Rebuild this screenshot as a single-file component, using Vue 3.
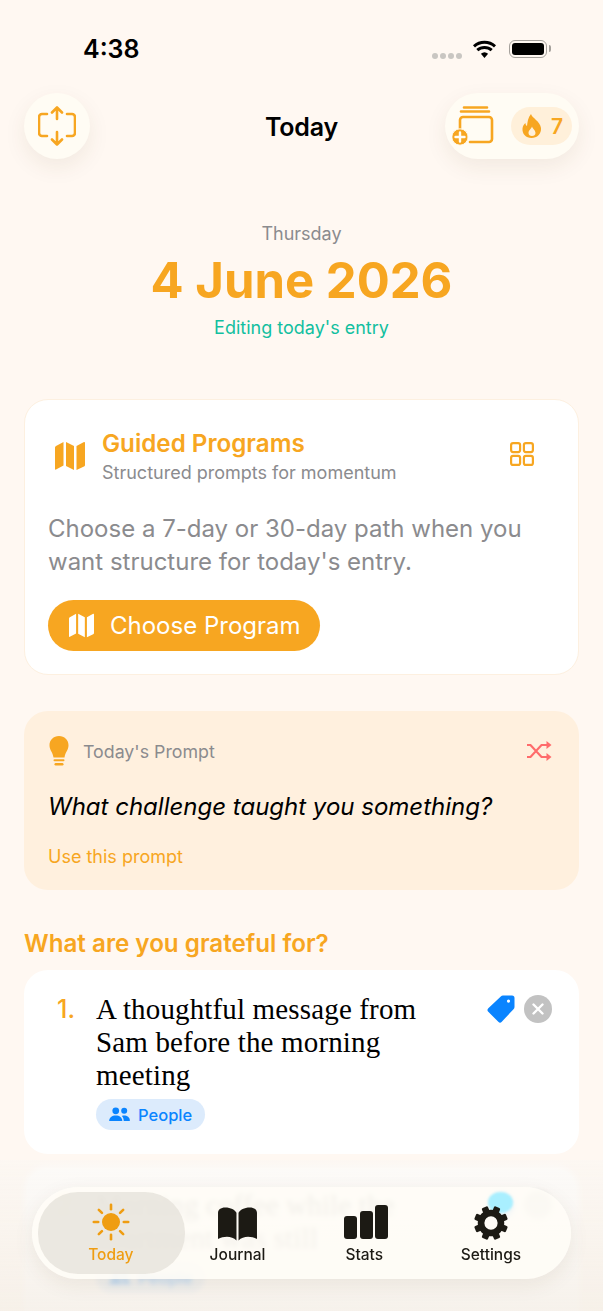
<script setup>
const tabs = [
  { key: 'today', label: 'Today' },
  { key: 'journal', label: 'Journal' },
  { key: 'stats', label: 'Stats' },
  { key: 'settings', label: 'Settings' },
]
const gearTeeth = [0, 45, 90, 135, 180, 225, 270, 315]
const sunRays = [0, 45, 90, 135, 180, 225, 270, 315]
</script>

<template>
  <div class="screen">
    <div class="status-bar">
      <span class="clock">4:38</span>
      <div class="status-icons">
        <div class="signal"><i></i><i></i><i></i><i></i></div>
        <svg class="wifi" viewBox="0 0 24 18" width="25" height="18">
          <path d="M12 18l-3.600-4.200a5.400 5.400 0 0 1 7.200 0z" fill="#000" />
          <path d="M4.800 10.200a10.600 10.600 0 0 1 14.400 0M1.500 6.300a15.600 15.600 0 0 1 21 0" fill="none" stroke="#000" stroke-width="3" />
        </svg>
        <div class="battery"><div class="battery-fill"></div></div>
      </div>
    </div>

    <header class="nav">
      <button class="round-btn">
        <svg viewBox="0 0 38 40" width="38" height="40" fill="none" stroke="#F7A621" stroke-width="2.600" stroke-linecap="round" stroke-linejoin="round">
          <path d="M9 8H4a3 3 0 0 0-3 3v16a3 3 0 0 0 3 3h5M29 8h5a3 3 0 0 1 3 3v16a3 3 0 0 1-3 3h-5" />
          <path d="M19 13V1.500M14 6.500l5-5 5 5M19 26v12.500M14 33.500l5 5 5-5" />
        </svg>
      </button>
      <h1 class="nav-title">Today</h1>
      <div class="nav-side">
        <div class="nav-pill">
          <svg class="cards-icon" viewBox="0 0 42 40" width="42" height="40" fill="none" stroke="#F7A621" stroke-width="2.600" stroke-linecap="round">
            <path d="M12 1.500h23M9 5.500h28" />
            <path d="M8 24V14a3 3 0 0 1 3-3h26a3 3 0 0 1 3 3v19a3 3 0 0 1-3 3H18" />
            <circle cx="8" cy="31" r="8.200" fill="#F7A621" stroke="#FFFCF4" stroke-width="1" />
            <path d="M8 26.500v9M3.500 31h9" stroke="#FFFCF4" stroke-width="2.400" />
          </svg>
          <div class="streak">
            <svg viewBox="0 0 20 24" width="20" height="24">
              <path fill="#F7A621" fill-rule="evenodd" d="M9 0c1 4 9 7 10 14 .5 6-4 10-9.500 10S0 20 .5 14.500c.2-2.500 1.500-4.500 3-5.500 0 1.500.5 2.500 1.500 3C5.500 8 6 3.500 9 0zM10 12.500c-.5 2-3.500 3.500-3.500 6.500 0 2 1.500 3 3.500 3s3.500-1 3.500-3c0-3-3-4.500-3.500-6.500z" />
            </svg>
            <span>7</span>
          </div>
        </div>
      </div>
    </header>

    <section class="date-block">
      <p class="weekday">Thursday</p>
      <p class="date">4 June 2026</p>
      <p class="editing">Editing today's entry</p>
    </section>

    <section class="card program-card">
      <div class="program-head">
        <svg class="map-icon" viewBox="0 0 32 30" width="32" height="30" fill="#F7A621">
          <path d="M1 6.500Q1 5.500 2 5L9.500 1v23.500L2 28.500Q1 29 1 28zM12 1l8 4v24l-8-4zM22.500 5L30 1q1-.3 1 1v22q0 1-1 1.500L22.500 29z" />
        </svg>
        <div class="program-titles">
          <h2>Guided Programs</h2>
          <p>Structured prompts for momentum</p>
        </div>
        <svg class="grid-icon" viewBox="0 0 24 24" width="24" height="24" fill="none" stroke="#F7A621" stroke-width="2.200">
          <rect x="1.100" y="1.100" width="9" height="9" rx="2" />
          <rect x="13.900" y="1.100" width="9" height="9" rx="2" />
          <rect x="1.100" y="13.900" width="9" height="9" rx="2" />
          <rect x="13.900" y="13.900" width="9" height="9" rx="2" />
        </svg>
      </div>
      <p class="program-copy">Choose a 7-day or 30-day path when you want structure for today's entry.</p>
      <button class="choose-btn">
        <svg viewBox="0 0 32 30" width="27" height="25" fill="#fff">
          <path d="M1 6.500Q1 5.500 2 5L9.500 1v23.500L2 28.500Q1 29 1 28zM12 1l8 4v24l-8-4zM22.500 5L30 1q1-.3 1 1v22q0 1-1 1.500L22.500 29z" />
        </svg>
        <span>Choose Program</span>
      </button>
    </section>

    <section class="card prompt-card">
      <div class="prompt-head">
        <svg class="bulb" viewBox="0 0 20 30" width="20" height="30" fill="#F7A621">
          <path d="M10 0c5.500 0 9.500 4 9.500 9.200 0 5-3.300 6.800-4 12.300H4.500c-.7-5.500-4-7.300-4-12.300C.5 4 4.500 0 10 0z" />
          <rect x="4.500" y="23.300" width="11" height="2" rx="1" />
          <rect x="5.500" y="27" width="9" height="2.400" rx="1.200" />
        </svg>
        <span class="prompt-label">Today's Prompt</span>
        <svg class="shuffle" viewBox="0 0 26 20" width="26" height="20" fill="none" stroke="#FF6B6B" stroke-width="2.200">
          <path d="M1 4h3.500l11 12H21M1 16h3.500l11-12H21" />
          <path d="M20.500 0l5 4-5 4zM20.500 12l5 4-5 4z" fill="#FF6B6B" stroke="none" />
        </svg>
      </div>
      <p class="prompt-text">What challenge taught you something?</p>
      <a class="prompt-link">Use this prompt</a>
    </section>

    <h3 class="section-title">What are you grateful for?</h3>

    <section class="card entry-card">
      <span class="entry-num">1.</span>
      <div class="entry-body">
        <p class="entry-text">A thoughtful message from Sam before the morning meeting</p>
        <span class="chip">
          <svg viewBox="0 0 22 16" width="21" height="15" fill="#0A84FF">
            <circle cx="7" cy="4" r="3.600" />
            <circle cx="16" cy="4" r="3.200" />
            <path d="M0 15c0-4 3-6 7-6s7 2 7 6zM15.500 15c0-2.300-.6-4.200-2-5.500 4-1.200 8.500.8 8.500 4.500v1z" />
          </svg>
          People
        </span>
      </div>
      <div class="entry-actions">
        <svg viewBox="0 0 28 28" width="28" height="28">
          <path fill="#0A84FF" fill-rule="evenodd" d="M16 .5h9A2.500 2.500 0 0 1 27.500 3v9a3 3 0 0 1-1 2.200L14.800 26.800a2.500 2.500 0 0 1-3.500 0l-10-10a2.500 2.500 0 0 1 0-3.500L13.800 1.500a3 3 0 0 1 2.200-1zM21.500 4.500a1.600 1.600 0 1 0 0 3.200 1.600 1.600 0 0 0 0-3.200z" />
        </svg>
        <div class="close-dot">
          <svg viewBox="0 0 12 12" width="12" height="12" stroke="#fff" stroke-width="2.400" stroke-linecap="round">
            <path d="M1.500 1.500l9 9M10.500 1.500l-9 9" />
          </svg>
        </div>
      </div>
    </section>

    <section class="card entry-card">
      <span class="entry-num">2.</span>
      <div class="entry-body">
        <p class="entry-text">Morning coffee while the apartment was still</p>
        <span class="chip">
          <svg viewBox="0 0 22 16" width="21" height="15" fill="#0A84FF">
            <circle cx="7" cy="4" r="3.600" />
            <circle cx="16" cy="4" r="3.200" />
            <path d="M0 15c0-4 3-6 7-6s7 2 7 6zM15.500 15c0-2.300-.6-4.200-2-5.500 4-1.200 8.500.8 8.500 4.500v1z" />
          </svg>
          People
        </span>
      </div>
      <div class="entry-actions">
        <svg viewBox="0 0 28 28" width="28" height="28">
          <circle cx="14" cy="14" r="13" fill="#0A84FF" />
        </svg>
        <div class="close-dot"></div>
      </div>
    </section>

    <div class="bottom-fade"></div>

    <nav class="tabbar">
      <div class="lens-blob"></div>
      <div v-for="tab in tabs" :key="tab.key" class="tab" :class="{ active: tab.key === 'today' }">
        <svg v-if="tab.key === 'today'" viewBox="0 0 38 38" width="38" height="38">
          <circle cx="19" cy="19" r="9" fill="#EF9D12" />
          <rect v-for="r in sunRays" :key="r" x="17.700" y="0.500" width="2.600" height="7" rx="1.300" fill="#EF9D12" :transform="`rotate(${r} 19 19)`" />
        </svg>
        <svg v-else-if="tab.key === 'journal'" viewBox="0 0 40 36" width="41" height="34" preserveAspectRatio="none" fill="#1C1A14">
          <path d="M19 6C17.500 3 13.500.5 8 .5 3.500.5 1 3 1 6v28c6-3.500 13.500-3.500 18 1.500zM21 6C22.500 3 26.500.5 32 .5 36.500.5 39 3 39 6v28c-6-3.500-13.500-3.500-18 1.500z" />
        </svg>
        <svg v-else-if="tab.key === 'stats'" class="stats-icon" viewBox="0 0 44 36" width="44" height="36" fill="#1C1A14">
          <rect x="0" y="11" width="13" height="23" rx="3" />
          <rect x="16" y="6" width="13" height="28" rx="3" />
          <rect x="31" y="0" width="13" height="34" rx="3" />
        </svg>
        <svg v-else viewBox="0 0 38 38" width="36" height="36">
          <circle cx="19" cy="19" r="10.500" fill="none" stroke="#1C1A14" stroke-width="7" />
          <rect v-for="t in gearTeeth" :key="t" x="15.500" y="1" width="7" height="7" rx="1.500" fill="#1C1A14" :transform="`rotate(${t + 22.500} 19 19)`" />
        </svg>
        <span>{{ tab.label }}</span>
      </div>
    </nav>
  </div>
</template>

<style scoped>
.screen {
  position: relative;
  width: 603px;
  height: 1311px;
  overflow: hidden;
  background: #fff8f2;
  font-family: Inter, 'Liberation Sans', sans-serif;
  color: #000;
}

.status-bar {
  display: flex;
  justify-content: space-between;
  align-items: center;
  height: 34px;
  padding: 32px 56px 0 83px;
}

.clock {
  font-size: 25px;
  font-weight: 600;
}

.status-icons {
  display: flex;
  align-items: center;
  gap: 12px;
}

.signal {
  display: flex;
  gap: 2px;
  margin-top: 14px;
  margin-right: -2px;
}

.signal i {
  width: 6px;
  height: 6px;
  border-radius: 50%;
  background: #c9c6c2;
}

.battery {
  position: relative;
  width: 38px;
  height: 18px;
  padding: 2px;
  box-sizing: border-box;
  border: 1.500px solid #a5a19c;
  border-radius: 6px;
}

.battery::after {
  content: '';
  position: absolute;
  right: -5px;
  top: 4px;
  width: 2px;
  height: 7px;
  border-radius: 0 2px 2px 0;
  background: #a5a19c;
}

.battery-fill {
  width: 100%;
  height: 100%;
  border-radius: 3px;
  background: #000;
}

.nav {
  display: grid;
  grid-template-columns: 1fr auto 1fr;
  align-items: center;
  margin-top: 27px;
  padding: 0 24px;
}

.round-btn {
  display: flex;
  align-items: center;
  justify-content: center;
  width: 66px;
  height: 66px;
  padding: 0;
  border: 0;
  border-radius: 50%;
  background: #fffcf4;
  box-shadow: 0 8px 22px rgba(90, 60, 30, 0.08);
}

.nav-title {
  margin: 2px 0 0;
  font-size: 25px;
  font-weight: 600;
  letter-spacing: -0.2px;
}

.nav-side {
  display: flex;
  justify-content: flex-end;
}

.nav-pill {
  display: flex;
  align-items: center;
  gap: 18px;
  width: 134px;
  height: 66px;
  padding-left: 7px;
  box-sizing: border-box;
  border-radius: 33px;
  background: #fffcf4;
  box-shadow: 0 8px 22px rgba(90, 60, 30, 0.08);
}

.cards-icon {
  flex-shrink: 0;
}

.streak {
  display: flex;
  align-items: center;
  gap: 9px;
  width: 61px;
  height: 38px;
  padding-left: 11px;
  box-sizing: border-box;
  margin-left: -1px;
  border-radius: 19px;
  background: #fff0da;
  color: #f7a621;
  font-size: 21px;
  font-weight: 600;
}

.date-block {
  margin-top: 63px;
  text-align: center;
}

.date-block p {
  margin: 0;
}

.weekday {
  font-size: 18px;
  line-height: 24px;
  color: #8b8b8e;
}

.date-block .date {
  margin-top: 4px;
  font-size: 49px;
  line-height: 62px;
  font-weight: 700;
  color: #f7a621;
}

.date-block .editing {
  margin-top: 4px;
  font-size: 18px;
  line-height: 24px;
  color: #12bfa0;
}

.card {
  margin: 0 24px;
  border-radius: 24px;
  background: #fff;
  box-sizing: border-box;
}

.program-card {
  margin-top: 59px;
  height: 276px;
  padding: 29px 23px 0;
  border: 1px solid #fdf0e0;
}

.program-head {
  display: flex;
  align-items: center;
}

.map-icon {
  margin-left: 6px;
  margin-top: -2px;
}

.program-titles {
  margin-left: 16px;
  flex: 1;
}

.program-titles h2 {
  margin: 0;
  font-size: 24.200px;
  line-height: 30px;
  font-weight: 600;
  color: #f7a621;
}

.program-titles p {
  margin: 2px 0 0;
  font-size: 18px;
  line-height: 24px;
  font-weight: 400;
  color: #8b8b8e;
}

.grid-icon {
  margin-right: 21px;
  margin-top: -7px;
}

.program-copy {
  margin: 27px 0 0;
  font-size: 24px;
  line-height: 33px;
  color: #8b8b8e;
}

.choose-btn {
  display: flex;
  align-items: center;
  gap: 15px;
  height: 51px;
  margin-top: 22px;
  padding: 0 19px 0 20px;
  border: 0;
  border-radius: 26px;
  background: #f7a621;
  color: #fff;
  font-family: inherit;
  font-size: 24px;
}

.prompt-card {
  margin-top: 36px;
  height: 179px;
  padding: 24px 24px 0;
  background: #fff0de;
}

.prompt-head {
  display: flex;
  align-items: center;
  height: 32px;
}

.bulb {
  margin-left: 1px;
}

.prompt-label {
  margin-left: 14px;
  flex: 1;
  font-size: 17.800px;
  font-weight: 400;
  color: #8b8b8e;
}

.shuffle {
  margin-right: 3px;
}

.prompt-text {
  margin: 24px 0 0;
  font-size: 24px;
  line-height: 32px;
  font-style: italic;
}

.prompt-link {
  display: block;
  margin-top: 22px;
  font-size: 18px;
  line-height: 24px;
  font-weight: 400;
  color: #f7a621;
}

.section-title {
  margin: 39px 24px 0;
  font-size: 24.200px;
  line-height: 30px;
  font-weight: 600;
  color: #f7a621;
}

.entry-card {
  display: flex;
  margin-top: 12px;
  padding: 23px 27px 24px 33px;
  min-height: 184px;
}

.section-title + .entry-card {
  margin-top: 11px;
}

.entry-num {
  width: 39px;
  font-size: 25px;
  line-height: 33px;
  font-weight: 500;
  color: #f7a621;
}

.entry-body {
  flex: 1;
  width: 340px;
}

.entry-text {
  margin: 0;
  width: 340px;
  font-family: 'Liberation Serif', serif;
  font-size: 29px;
  line-height: 33px;
  letter-spacing: 0.15px;
  color: #000;
}

.chip {
  display: inline-flex;
  align-items: center;
  gap: 8px;
  height: 31px;
  margin-top: 7px;
  padding: 0 13px;
  border-radius: 16px;
  background: #dcebfc;
  color: #0a84ff;
  font-size: 16.500px;
  font-weight: 500;
}

.entry-actions {
  display: flex;
  align-items: flex-start;
  gap: 9px;
  margin-top: 2px;
}

.close-dot {
  display: flex;
  align-items: center;
  justify-content: center;
  width: 28px;
  height: 28px;
  border-radius: 50%;
  background: #c2c2c2;
}

.bottom-fade {
  position: absolute;
  left: 0;
  right: 0;
  top: 1160px;
  bottom: 0;
  backdrop-filter: blur(2.500px);
  background: linear-gradient(to bottom, rgba(250, 247, 243, 0.55), rgba(244, 238, 230, 0.78));
}

.tabbar {
  position: absolute;
  left: 32px;
  right: 32px;
  top: 1187px;
  isolation: isolate;
  display: grid;
  grid-template-columns: repeat(4, 126.700px);
  height: 92px;
  padding-left: 15.500px;
  box-sizing: border-box;
  border-radius: 46px;
  background: rgba(255, 253, 247, 0.86);
  box-shadow: 0 6px 20px rgba(90, 60, 30, 0.08);
}

.lens-blob {
  position: absolute;
  left: 456px;
  top: 5px;
  width: 25px;
  height: 21px;
  border-radius: 50%;
  background: #a9efff;
  filter: blur(1px);
  z-index: -1;
}

.tab {
  position: relative;
  display: flex;
  flex-direction: column;
  align-items: center;
  justify-content: flex-end;
  gap: 4px;
  height: 77px;
  font-size: 15.500px;
  line-height: 19px;
  font-weight: 500;
  color: #1c1a14;
}

.tab.active {
  color: #ef9d12;
}

.tab.active::before {
  content: '';
  position: absolute;
  left: -9.500px;
  right: -11px;
  top: 5px;
  bottom: -10px;
  border-radius: 40px;
  background: rgba(230, 226, 218, 0.78);
  z-index: -1;
}

.stats-icon {
  margin-left: 3px;
}
</style>

<style>
html,
body {
  margin: 0;
  background: #fff8f2;
}
</style>
